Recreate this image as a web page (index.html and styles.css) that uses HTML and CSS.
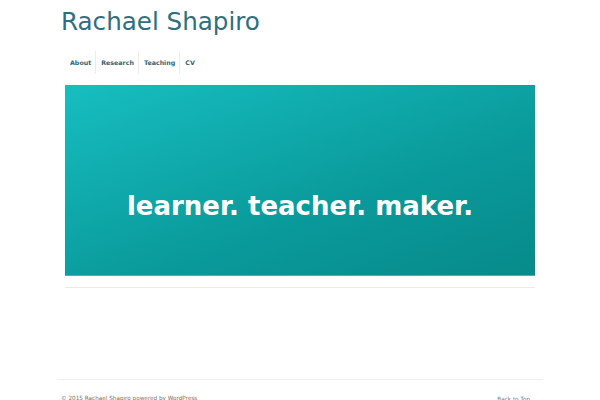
FILE: index.html
```html
<!DOCTYPE html>
<html lang="en">
<head>
    <meta charset="UTF-8">
    <meta name="viewport" content="width=device-width, initial-scale=1.0">
    <title>Rachael Shapiro</title>
    <link rel="stylesheet" href="styles.css">
</head>
<body>
    <div class="site">
        <!-- Header -->
        <header class="site-header">
            <h1 class="site-title"><a href="#">Rachael Shapiro</a></h1>
            <nav class="main-nav">
                <ul>
                    <li><a href="#">About</a></li>
                    <li><a href="#">Research</a></li>
                    <li><a href="#">Teaching</a></li>
                    <li><a href="#">CV</a></li>
                </ul>
            </nav>
        </header>

        <!-- Main Content -->
        <main class="content">
            <div class="banner">
                <p>learner. teacher. maker.</p>
            </div>
            <hr class="divider">
        </main>

        <!-- Footer -->
        <footer class="site-footer">
            <p>&copy; 2015 <a href="#">Rachael Shapiro</a> powered by <a href="#">WordPress</a></p>
            <a href="#" class="back-top">Back to Top</a>
        </footer>
    </div>
</body>
</html>
```

FILE: styles.css
```css
* {
    margin: 0;
    padding: 0;
    box-sizing: border-box;
}

body {
    font-family: "DejaVu Sans", sans-serif;
    background-color: #fff;
    color: #555;
}

a {
    text-decoration: none;
}

.site {
    width: 486px;
    margin: 0 auto;
}

/* Header */
.site-title {
    font-size: 24.6px;
    font-weight: normal;
    line-height: 1;
    padding: 10px 0 0 4px;
}

.site-title a {
    color: #2f6f80;
}

.main-nav {
    margin-top: 16px;
    padding-left: 8px;
}

.main-nav ul {
    list-style: none;
    display: flex;
}

.main-nav li {
    border-right: 1px solid #f1ebe3;
    padding: 0 4px 0 5px;
    height: 23px;
    display: flex;
    align-items: center;
}

.main-nav li:first-child {
    padding-left: 5px;
}

.main-nav li:last-child {
    border-right: none;
}

.main-nav a {
    font-size: 6.3px;
    font-weight: bold;
    color: #2f6577;
}

/* Banner */
.content {
    padding: 11px 8px 0;
}

.banner {
    height: 191px;
    background: linear-gradient(160deg, #17bec0 0%, #0a9a9b 60%, #078a8a 100%);
    border-bottom: 1px solid #3cb8b8;
    display: flex;
    align-items: center;
    justify-content: center;
}

.banner p {
    color: #fff;
    font-weight: bold;
    font-size: 26px;
    margin-top: 52px;
}

.divider {
    border: none;
    border-top: 1px solid #eeeae6;
    margin-top: 11px;
}

/* Footer */
.site-footer {
    margin-top: 91px;
    border-top: 1px solid #eeeeee;
    padding: 15px 4px 0;
    display: flex;
    justify-content: space-between;
    font-size: 5.7px;
    color: #777;
}

.site-footer a {
    color: #8a6a4a;
}

.site-footer .back-top {
    color: #777;
    margin-right: 9px;
    margin-top: 1px;
}
```
